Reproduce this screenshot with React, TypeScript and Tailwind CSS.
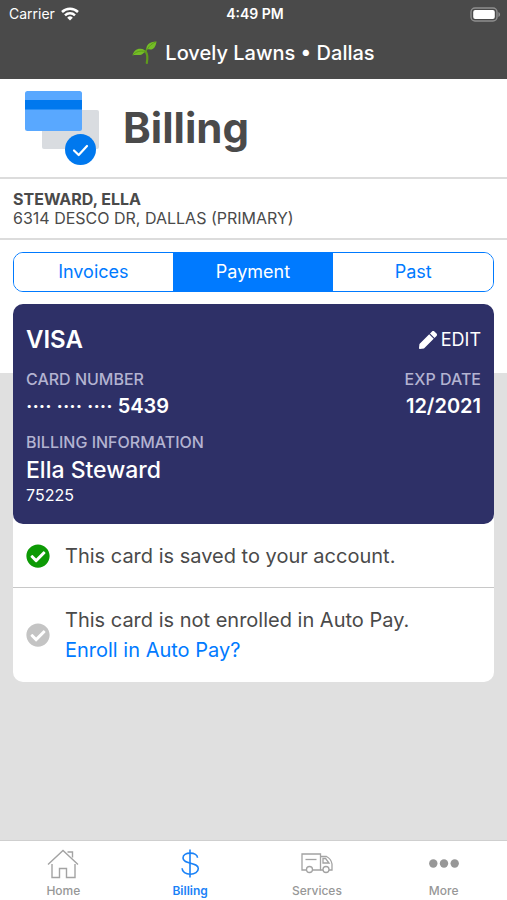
import React, { useState } from 'react';
import { FaCheckCircle, FaPen } from 'react-icons/fa';

const WifiIcon = () => (
  <svg viewBox="0 0 18 14" className="h-[14px] w-[18px]" fill="none" stroke="#fff" strokeWidth="2.5">
    <path d="M1 5a11.500 11.500 0 0 1 16 0" />
    <path d="M4 8.300a7.300 7.300 0 0 1 10 0" />
    <path d="M9 13.500 6.200 10.700a4 4 0 0 1 5.600 0Z" fill="#fff" stroke="none" />
  </svg>
);

const BatteryIcon = () => (
  <svg viewBox="0 0 31 15" className="h-[15px] w-[31px]">
    <rect x="1" y="1" width="26" height="13" rx="4" fill="#4a4a4a" stroke="#8f8f8f" strokeWidth="1.4" />
    <rect x="3.2" y="3" width="21.6" height="9" rx="2" fill="#fff" />
    <path d="M28.4 5v5c1-.4 1.7-1.300 1.700-2.500S29.400 5.400 28.400 5Z" fill="#8f8f8f" />
  </svg>
);

const SproutIcon = () => (
  <svg viewBox="0 0 25 24" className="h-6 w-[25px]">
    <path d="M13.500 10.500c1.800 2 2.300 6 1.300 11.500" fill="none" stroke="#5f9a1d" strokeWidth="2.200" strokeLinecap="round" />
    <path d="M13.900 11.500c0-2.500.8-4 3-5.500" fill="none" stroke="#5f9a1d" strokeWidth="1.500" />
    <path d="M.5 14.500C1.500 10 4.500 7.500 8.500 7.700c3 .2 4.500 1.500 5.500 3-2.500.6-3.500 3.300-7 3.400-2.500 0-4-.6-6.500.4Z" fill="#74bd27" />
    <path d="M1 14c3-3.500 7-4.500 12.500-3.500" fill="none" stroke="#559012" strokeWidth=".7" />
    <path d="M14.500 8.600C14 4 17 .8 24.500.4c-.5 3-1.500 7.200-5 8-2 .5-3.500-.5-5 .2Z" fill="#74bd27" />
    <path d="M15.500 8c2-3.500 4.500-5.500 8.500-7.200" fill="none" stroke="#559012" strokeWidth=".7" />
  </svg>
);

const BillingIcon = () => (
  <svg viewBox="0 0 74 74" className="h-[74px] w-[74px]">
    <rect x="17" y="19" width="57" height="39" rx="2" fill="#d9dce0" />
    <rect x="0" y="0" width="57" height="40" rx="2.500" fill="#59a8ff" />
    <rect x="0" y="9" width="57" height="9.500" fill="#0078ee" />
    <circle cx="55.500" cy="58.500" r="15.500" fill="#0078ee" />
    <path d="m49 59.500 4.700 4.500 8.300-9" fill="none" stroke="#fff" strokeWidth="2.200" strokeLinecap="round" strokeLinejoin="round" />
  </svg>
);

const HomeIcon = () => (
  <svg viewBox="0 0 32 30" className="h-[30px] w-8" fill="none" stroke="#a3a3a3" strokeWidth="1.400">
    <path d="M1 15.500 16 1.500 31 15.500" />
    <path d="M5 15v13.500h7.500v-9h7v9H28V15" />
    <path d="M20.500 3h5v5.500" />
  </svg>
);

const DollarIcon = () => (
  <svg viewBox="0 0 32 30" className="h-[30px] w-8" fill="none" stroke="currentColor" strokeWidth="1.600">
    <path d="M16 .5v28" />
    <path d="M23.500 8.800c0-2.800-3.200-4.700-7.300-4.700S9 6 9 9c0 6.800 15.300 3.600 15.300 10.600 0 3.300-3.500 5.600-8 5.600s-8.200-2.300-8.200-5.900" />
  </svg>
);

const TruckIcon = () => (
  <svg viewBox="0 0 32 30" className="h-[30px] w-8" fill="none" stroke="#a3a3a3" strokeWidth="1.300">
    <path d="M5.500 21H1V5h18.500v16h-8" />
    <path d="M19.500 7.500h6c3 1.500 5 4.500 5.500 7.500v6h-3M22 21h-2.500" />
    <path d="M22 9.500h2.600l3.400 4.500h-6Z" />
    <path d="M4.500 10.500h11" />
    <circle cx="8.500" cy="20.500" r="3" />
    <circle cx="25" cy="20.500" r="3" />
  </svg>
);

const MoreIcon = () => (
  <svg viewBox="0 0 32 30" className="h-[30px] w-8" fill="currentColor">
    <circle cx="5.300" cy="14.500" r="4.200" />
    <circle cx="16" cy="14.500" r="4.200" />
    <circle cx="26.700" cy="14.500" r="4.200" />
  </svg>
);

const segments = ['Invoices', 'Payment', 'Past'];

const tabs = [
  { label: 'Home', Icon: HomeIcon },
  { label: 'Billing', Icon: DollarIcon },
  { label: 'Services', Icon: TruckIcon },
  { label: 'More', Icon: MoreIcon },
];

const TopBar = () => (
  <header className="bg-[#4a4a4a] text-white">
    <div className="grid h-7 grid-cols-3 items-center pl-[9px] pr-[6px] text-sm">
      <div className="flex items-center gap-[6px]">
        <span>Carrier</span>
        <WifiIcon />
      </div>
      <span className="text-center font-semibold">4:49 PM</span>
      <div className="flex justify-end">
        <BatteryIcon />
      </div>
    </div>
    <div className="flex h-[51px] items-center justify-center gap-2 pb-[2px] text-xl font-medium">
      <SproutIcon />
      <span>Lovely Lawns • Dallas</span>
    </div>
  </header>
);

const PaymentCard = () => (
  <div className="rounded-[10px] bg-[#2e3067] px-[13px] py-5 text-white">
    <div className="flex items-center justify-between">
      <h2 className="text-2xl font-semibold">VISA</h2>
      <button type="button" className="flex items-center gap-1 text-lg">
        <FaPen className="h-[18px] w-[18px]" />
        EDIT
      </button>
    </div>
    <dl className="mt-[11px] flex justify-between">
      <div>
        <dt className="text-base font-medium text-[#b3b3d1]">CARD NUMBER</dt>
        <dd className="text-xl leading-[30px] font-semibold">···· ···· ···· 5439</dd>
      </div>
      <div className="text-right">
        <dt className="text-base font-medium text-[#b3b3d1]">EXP DATE</dt>
        <dd className="text-xl leading-[30px] font-semibold">12/2021</dd>
      </div>
    </dl>
    <h3 className="mt-[9px] text-base font-medium text-[#b3b3d1]">BILLING INFORMATION</h3>
    <p className="text-[23px] leading-8 font-medium">Ella Steward</p>
    <p className="text-base leading-[18px]">75225</p>
  </div>
);

const App: React.FC = () => {
  const [segment, setSegment] = useState('Payment');
  const [tab, setTab] = useState('Billing');

  return (
    <div className="flex min-h-screen flex-col bg-[#e0e0e0] font-['Inter','Liberation_Sans',sans-serif] text-[#4a4a4a]">
      <TopBar />

      <div className="flex items-center gap-6 border-b-2 border-[#dcdcdc] bg-white px-[25px] py-3">
        <BillingIcon />
        <h1 className="text-[42px] leading-none font-bold">Billing</h1>
      </div>

      <div className="border-b-2 border-[#dcdcdc] bg-white px-[13px] pt-[11px] pb-[10px] text-base leading-[19px]">
        <p className="font-bold">STEWARD, ELLA</p>
        <p>6314 DESCO DR, DALLAS (PRIMARY)</p>
      </div>

      <div className="bg-white px-[13px] py-3">
        <div className="grid grid-cols-3 divide-x divide-[#007aff] overflow-hidden rounded-[10px] border border-[#007aff]">
          {segments.map((name) => (
            <button
              key={name}
              type="button"
              aria-pressed={segment === name}
              onClick={() => setSegment(name)}
              className={`h-[38px] text-lg ${segment === name ? 'bg-[#007aff] text-white' : 'bg-white text-[#007aff]'}`}
            >
              {name}
            </button>
          ))}
        </div>
      </div>

      <main className="grow bg-[linear-gradient(#fff_69px,#e0e0e0_69px)] px-[13px] pb-6">
        <div className="rounded-[10px] bg-white text-xl">
          <PaymentCard />
          <div className="flex h-16 items-center gap-[15px] border-b border-[#c8c8c8] px-[13px]">
            <FaCheckCircle className="h-6 w-6 shrink-0 text-[#0d9a05]" />
            <p>This card is saved to your account.</p>
          </div>
          <div className="flex items-center gap-[15px] px-[13px] py-[17px] leading-[30px]">
            <FaCheckCircle className="h-6 w-6 shrink-0 text-[#c4c4c4]" />
            <div>
              <p>This card is not enrolled in Auto Pay.</p>
              <a href="#autopay" className="text-[#007aff]">
                Enroll in Auto Pay?
              </a>
            </div>
          </div>
        </div>
      </main>

      <nav className="grid grid-cols-4 border-t border-[#cfcfcf] bg-white pt-2 pb-px">
        {tabs.map(({ label, Icon }) => (
          <button
            key={label}
            type="button"
            onClick={() => setTab(label)}
            className={`flex flex-col items-center gap-1 text-xs ${tab === label ? 'font-semibold text-[#1a82f7]' : 'font-medium text-[#979797]'}`}
          >
            <Icon />
            <span>{label}</span>
          </button>
        ))}
      </nav>
    </div>
  );
};

export default App;
